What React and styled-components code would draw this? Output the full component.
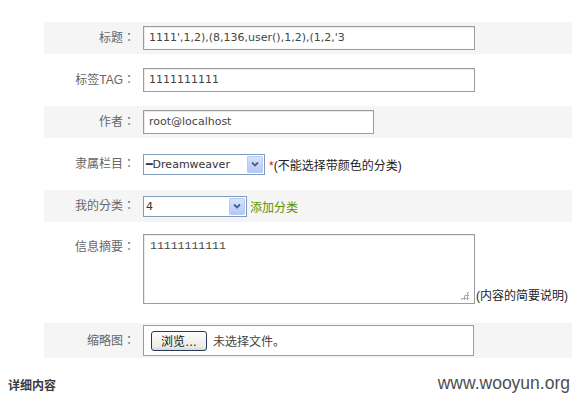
import styled, { createGlobalStyle } from "styled-components";

const GlobalStyle = createGlobalStyle`
  body {
    margin: 0;
    background: #fff;
    font-family: "Liberation Sans", "Noto Sans CJK SC", sans-serif;
    font-size: 12px;
    color: #333;
  }
`;

const Page = styled.div`
  width: 572px;
  height: 393px;
  padding-top: 22px;
  box-sizing: border-box;
  overflow: hidden;
`;

const Form = styled.div`
  margin-left: 44px;
  display: flex;
  flex-direction: column;
  gap: 10px;
`;

const Row = styled.div`
  display: grid;
  grid-template-columns: 99px 1fr;
  align-items: ${(p) => (p.$top ? "start" : "center")};
  min-height: ${(p) => p.$h || 32}px;
  padding: ${(p) => p.$pad || "0"};
  box-sizing: border-box;
  background: ${(p) => (p.$alt ? "#f5f5f5" : "transparent")};
`;

const Label = styled.div`
  text-align: right;
  padding-right: 8px;
  line-height: 24px;
  margin-top: ${(p) => p.$mt || 0}px;
  color: #666;
  font-family: "Liberation Sans", "Noto Sans CJK TC", sans-serif;
  font-size: 12px;
`;

const Field = styled.div`
  display: flex;
  align-items: ${(p) => (p.$end ? "flex-end" : "center")};
`;

const TextInput = styled.div`
  width: ${(p) => p.$w}px;
  height: 24px;
  box-sizing: border-box;
  border: 1px solid #9c9c9c;
  box-shadow: inset 1px 1px 0 #eaeaea;
  background: #fff;
  padding-left: 5px;
  line-height: 22px;
  font-family: "DejaVu Sans", Tahoma, sans-serif;
  font-size: 11px;
  color: #444;
  white-space: nowrap;
  overflow: hidden;
`;

const SelectBox = styled.div`
  width: ${(p) => p.$w}px;
  height: 21px;
  box-sizing: border-box;
  border: 1px solid #7f9db9;
  background: #fff;
  display: flex;
  align-items: center;
  justify-content: space-between;
  padding: 0 1px 0 2px;
  font-family: "DejaVu Sans", Tahoma, sans-serif;
  font-size: 11px;
  color: #333;
`;

const ArrowButton = styled.span`
  width: 16px;
  height: 17px;
  box-sizing: border-box;
  border: 1px solid #b9cbf3;
  border-radius: 1px;
  background: linear-gradient(#d8e3fb, #b4c8f6);
  display: flex;
  align-items: center;
  justify-content: center;
`;

const Note = styled.span`
  margin-left: 4px;
  color: #222;
  font-size: 12px;
`;

const Star = styled.span`
  color: #e00;
`;

const AddLink = styled.span`
  margin-left: 3px;
  color: #5d9100;
  font-size: 12px;
`;

const AreaWrap = styled.div`
  position: relative;
  width: 332px;
  height: 70px;
  box-sizing: border-box;
  border: 1px solid #9c9c9c;
  box-shadow: inset 1px 1px 0 #eaeaea;
  background: #fff;
  padding: 4px 6px;
  font-family: "Liberation Mono", "Courier New", monospace;
  font-size: 11.5px;
  color: #444;
`;

const Grip = styled.span`
  position: absolute;
  right: 5px;
  bottom: 3px;
  width: 9px;
  height: 9px;
  background-image: radial-gradient(#a8a8a8 1px, transparent 1.2px);
  background-size: 3px 3px;
  clip-path: polygon(100% 0, 100% 100%, 0 100%);
`;

const AreaNote = styled.span`
  margin-left: 1px;
  margin-bottom: 1px;
  color: #222;
  font-size: 12px;
  line-height: 14px;
`;

const FileBox = styled.div`
  width: 331px;
  height: 31px;
  box-sizing: border-box;
  border: 1px solid #9c9c9c;
  background: #fff;
  display: flex;
  align-items: center;
  padding-left: 7px;
  gap: 6px;
  color: #444;
  font-size: 12px;
`;

const BrowseButton = styled.span`
  width: 56px;
  height: 20px;
  box-sizing: border-box;
  border: 1px solid #243c5c;
  border-radius: 3px;
  background: linear-gradient(#fdfdfd, #ecebe6 80%, #d9d7cf);
  display: flex;
  align-items: center;
  justify-content: center;
  color: #111;
  font-size: 12px;
`;

const Footer = styled.div`
  display: flex;
  justify-content: space-between;
  align-items: center;
  margin-top: 16px;
  padding: 0 2px 0 8px;
`;

const Heading = styled.span`
  font-weight: bold;
  color: #3a3a3a;
  font-size: 12px;
  font-family: "Noto Sans CJK SC", sans-serif;
  margin-top: 1px;
`;

const Watermark = styled.span`
  font-family: "Liberation Sans", Arial, sans-serif;
  font-size: 17.5px;
  color: #4f4f4f;
  line-height: 19px;
`;

function Chevron() {
  return (
    <svg width="8" height="6" viewBox="0 0 8 6">
      <path d="M1 1.5 L4 4.5 L7 1.5" fill="none" stroke="#4d6185" strokeWidth="1.8" />
    </svg>
  );
}

export default function App() {
  return (
    <Page>
      <GlobalStyle />
      <Form>
        <Row $alt>
          <Label>标题：</Label>
          <Field>
            <TextInput $w={332}>1111',1,2),(8,136,user(),1,2),(1,2,'3</TextInput>
          </Field>
        </Row>
        <Row>
          <Label>标签TAG：</Label>
          <Field>
            <TextInput $w={332}>1111111111</TextInput>
          </Field>
        </Row>
        <Row $alt>
          <Label>作者：</Label>
          <Field>
            <TextInput $w={231}>root@localhost</TextInput>
          </Field>
        </Row>
        <Row>
          <Label>隶属栏目：</Label>
          <Field>
            <SelectBox $w={122}>
              <span>━Dreamweaver</span>
              <ArrowButton>
                <Chevron />
              </ArrowButton>
            </SelectBox>
            <Note>
              <Star>*</Star>(不能选择带颜色的分类)
            </Note>
          </Field>
        </Row>
        <Row $alt>
          <Label>我的分类：</Label>
          <Field>
            <SelectBox $w={104}>
              <span>4</span>
              <ArrowButton>
                <Chevron />
              </ArrowButton>
            </SelectBox>
            <AddLink>添加分类</AddLink>
          </Field>
        </Row>
        <Row $top $h={81} $pad="2px 0 0">
          <Label $mt={1}>信息摘要：</Label>
          <Field $end>
            <AreaWrap>
              11111111111
              <Grip />
            </AreaWrap>
            <AreaNote>(内容的简要说明)</AreaNote>
          </Field>
        </Row>
        <Row $alt $h={35}>
          <Label>缩略图：</Label>
          <Field>
            <FileBox>
              <BrowseButton>浏览…</BrowseButton>
              <span>未选择文件。</span>
            </FileBox>
          </Field>
        </Row>
      </Form>
      <Footer>
        <Heading>详细内容</Heading>
        <Watermark>www.wooyun.org</Watermark>
      </Footer>
    </Page>
  );
}
